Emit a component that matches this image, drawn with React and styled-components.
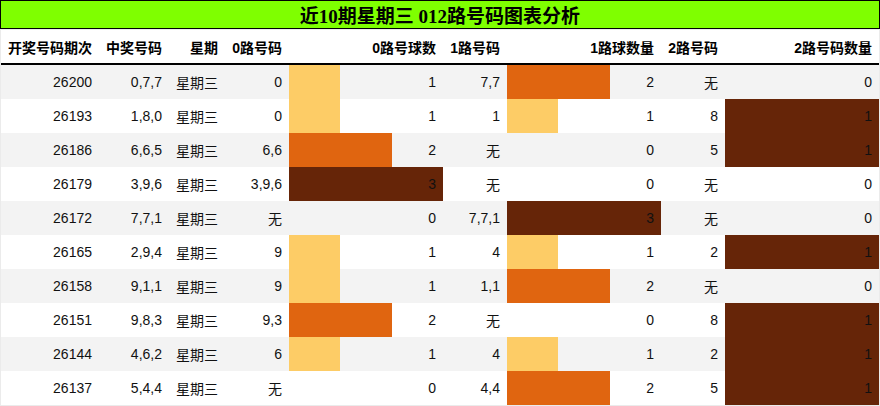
import React from "react";
import styled, { createGlobalStyle } from "styled-components";

const GlobalStyle = createGlobalStyle`
  html, body {
    margin: 0;
    padding: 0;
    background: #ffffff;
  }
  body {
    font-family: "Liberation Sans", "Noto Sans CJK SC", sans-serif;
    color: #111;
  }
`;

const Page = styled.div`
  width: 880px;
`;

const Title = styled.div`
  box-sizing: border-box;
  height: 29px;
  border: 1px solid #000;
  background: #7fff00;
  display: flex;
  align-items: center;
  justify-content: center;
  font-family: "Liberation Serif", "Noto Sans CJK SC", serif;
  font-weight: bold;
  font-size: 19px;
  color: #000;
`;

const Table = styled.table`
  width: 880px;
  box-sizing: border-box;
  table-layout: fixed;
  border-collapse: separate;
  border-spacing: 0;
  border: 1px solid #ebebeb;
  font-size: 14px;
`;

const Head = styled.th`
  height: 33px;
  padding: 0 7px;
  text-align: right;
  font-weight: bold;
  color: #000;
  border-bottom: 2px solid #000;
  white-space: nowrap;
`;

const Row = styled.tr`
  background: ${(p) => (p.$odd ? "#f3f3f3" : "#ffffff")};
`;

const Cell = styled.td`
  height: 34px;
  padding: 0 7px;
  text-align: right;
  white-space: nowrap;
`;

const BarCell = styled(Cell)`
  background: ${(p) =>
    p.$pct > 0
      ? `linear-gradient(to right, ${p.$color} ${p.$pct}%, transparent ${p.$pct}%)`
      : "none"};
`;

const columns = [
  { label: "开奖号码期次", width: 98 },
  { label: "中奖号码", width: 70 },
  { label: "星期", width: 56 },
  { label: "0路号码", width: 64 },
  { label: "0路号球数", width: 154 },
  { label: "1路号码", width: 64 },
  { label: "1路球数量", width: 154 },
  { label: "2路号码", width: 64 },
  { label: "2路号码数量", width: 154 },
];

const rows = [
  [26200, "0,7,7", "0", 1, "7,7", 2, "无", 0],
  [26193, "1,8,0", "0", 1, "1", 1, "8", 1],
  [26186, "6,6,5", "6,6", 2, "无", 0, "5", 1],
  [26179, "3,9,6", "3,9,6", 3, "无", 0, "无", 0],
  [26172, "7,7,1", "无", 0, "7,7,1", 3, "无", 0],
  [26165, "2,9,4", "9", 1, "4", 1, "2", 1],
  [26158, "9,1,1", "9", 1, "1,1", 2, "无", 0],
  [26151, "9,8,3", "9,3", 2, "无", 0, "8", 1],
  [26144, "4,6,2", "6", 1, "4", 1, "2", 1],
  [26137, "5,4,4", "无", 0, "4,4", 2, "5", 1],
];

const max0 = Math.max(...rows.map((r) => r[3]));
const max1 = Math.max(...rows.map((r) => r[5]));
const max2 = Math.max(...rows.map((r) => r[7]));

function colorFor(frac) {
  if (frac <= 0.34) return "#fdcc66";
  if (frac <= 0.67) return "#e06510";
  return "#662508";
}

function Bar({ value, max }) {
  const frac = max ? value / max : 0;
  return (
    <BarCell $pct={frac * 100} $color={colorFor(frac)}>
      {value}
    </BarCell>
  );
}

export default function App() {
  return (
    <Page>
      <GlobalStyle />
      <Title>近10期星期三 012路号码图表分析</Title>
      <Table>
        <colgroup>
          {columns.map((c) => (
            <col key={c.label} style={{ width: c.width }} />
          ))}
        </colgroup>
        <thead>
          <tr>
            {columns.map((c) => (
              <Head key={c.label}>{c.label}</Head>
            ))}
          </tr>
        </thead>
        <tbody>
          {rows.map((r, i) => (
            <Row key={r[0]} $odd={i % 2 === 0}>
              <Cell>{r[0]}</Cell>
              <Cell>{r[1]}</Cell>
              <Cell>星期三</Cell>
              <Cell>{r[2]}</Cell>
              <Bar value={r[3]} max={max0} />
              <Cell>{r[4]}</Cell>
              <Bar value={r[5]} max={max1} />
              <Cell>{r[6]}</Cell>
              <Bar value={r[7]} max={max2} />
            </Row>
          ))}
        </tbody>
      </Table>
    </Page>
  );
}
